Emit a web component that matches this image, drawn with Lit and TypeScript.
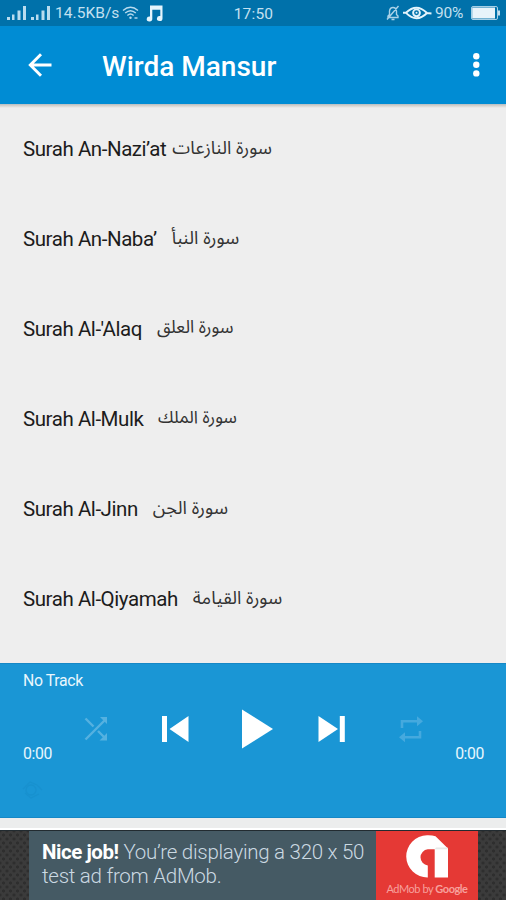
import { LitElement, html, svg, css } from "lit";
import { customElement } from "lit/decorators.js";

interface Surah { latin: string; arabic: string; gap: number; size: number }

const SURAHS: Surah[] = [
  { latin: "Surah An-Nazi’at", arabic: "سورة النازعات", gap: 6, size: 18.1 },
  { latin: "Surah An-Naba’", arabic: "سورة النبأ", gap: 15, size: 18.2 },
  { latin: "Surah Al-'Alaq", arabic: "سورة العلق", gap: 15, size: 17.5 },
  { latin: "Surah Al-Mulk", arabic: "سورة الملك", gap: 14.5, size: 17.4 },
  { latin: "Surah Al-Jinn", arabic: "سورة الجن", gap: 15, size: 18.3 },
  { latin: "Surah Al-Qiyamah", arabic: "سورة القيامة", gap: 15, size: 18.2 },
];

@customElement("status-bar")
export class StatusBar extends LitElement {
  static styles = css`
    :host { display: flex; height: 26px; background: #0071aa; color: #c3e0f0; font: 15.5px/27px Roboto, sans-serif; }
    .left, .right { flex: 1; display: flex; align-items: center; }
    .left { padding-left: 7px; }
    .right { justify-content: flex-end; padding-right: 6px; }
    .clock { flex: none; width: 42px; padding-top: 1px; text-align: center; letter-spacing: 0.2px; }
    .speed { margin-left: 4px; width: 65px; padding-top: 1px; letter-spacing: 0.05px; white-space: nowrap; }
    .pct { width: 30px; padding-top: 1px; margin: 0 6px 0 3px; letter-spacing: -0.2px; }
    svg { display: block; flex: none; }
    .sig + .sig { margin-left: 4px; }
    .wifi { margin-left: 2px; }
    .note { margin-left: 7px; }
    .eye { margin-left: 3px; }
  `;
  private signal() {
    return html`<svg class="sig" width="20" height="14" viewBox="0 0 20 14" fill="#b9dcef">
      <path d="M0 11h3v3H0zM5 8.500h2.500v5.500H5zM10.500 4.500h3v9.500h-3zM16 0h3v14h-3z"/></svg>`;
  }
  render() {
    return html`
      <div class="left">
        ${this.signal()}${this.signal()}
        <span class="speed">14.5KB/s</span>
        <svg class="wifi" width="17" height="14" viewBox="0 0 17 14" fill="none" stroke="#b9dcef" stroke-width="1.400">
          <path d="M1 4.500Q8.500-2 16 4.500M3.200 7Q8.500 2.300 13.800 7M5.400 9.400Q8.500 6.600 11.600 9.400"/>
          <circle cx="8.500" cy="11.800" r="1.200" fill="#b9dcef" stroke="none"/><path d="M12.500 12h3"/></svg>
        <svg class="note" width="17" height="17" viewBox="0 0 17 17" fill="#e4f4fc">
          <path d="M4 .5h12.500v13a2.800 2.500 0 1 1-2.200-2.400V4.800H6.300v9.200a2.800 2.500 0 1 1-2.300-2.500z"/></svg>
      </div>
      <span class="clock">17:50</span>
      <div class="right">
        <svg width="14" height="16" viewBox="0 0 14 16" fill="none" stroke="#a9d2e8" stroke-width="1.400">
          <path d="M2 12.500V11l1.500-1.500V6Q4 2.500 7 2.500T10.500 6v3.500L12 11v1.500zM1 14.500L12.500 1M5.500 14.500h3"/></svg>
        <svg class="eye" width="29" height="14" viewBox="0 0 29 14" fill="none" stroke="#e4f4fc" stroke-width="1.900">
          <path d="M0 6.800h3Q13.500-3.500 24 7L28.500 7.500M3 6.800Q13.500 17.500 24 7"/>
          <circle cx="13.500" cy="6.800" r="3.400"/><circle cx="13.500" cy="6.800" r="1" fill="#e4f4fc" stroke="none"/></svg>
        <span class="pct">90%</span>
        <svg width="29" height="14" viewBox="0 0 29 14"><rect x=".5" y=".5" width="26" height="13" rx="1.500" fill="none" stroke="#a5cfe6"/>
          <rect x="1.200" y="1.500" width="22.800" height="11" fill="#e8f3fa"/><path d="M27 4.500h2v5h-2z" fill="#c3e0f0"/></svg>
      </div>`;
  }
}

@customElement("player-bar")
export class PlayerBar extends LitElement {
  static styles = css`
    :host { display: flex; flex-direction: column; box-sizing: border-box; height: 155px; padding: 8px 22px 0 23px;
      background: #1a96d5; color: #e9f6fd; font: 15.8px/18px Roboto, sans-serif; border-top: 1px solid #1688c6; border-bottom: 1px solid #1688c6; }
    .track { letter-spacing: -0.35px; }
    .controls { display: grid; grid-template-columns: repeat(5, 78.7px); justify-items: center; align-items: center;
      height: 44px; margin: 17px 0 0 34px; }
    svg { display: block; }
    .times { display: flex; justify-content: space-between; margin-top: -6px; letter-spacing: -0.4px; }
    .ghost { margin: 18px 0 0 -2px; }
  `;
  render() {
    return html`
      <div class="track">No Track</div>
      <div class="controls">
        <svg width="28" height="28" viewBox="0 0 28 28" fill="none" stroke="#55b1e0" stroke-width="2.400">
          <path d="M3.500 3.500L11.500 11.500M3.500 24.500L23 5M16 16L23.500 23.500"/><path d="M18 2h7v7zM25 18v7.500h-7.500z" fill="#55b1e0" stroke="none"/></svg>
        <svg width="30" height="28" viewBox="0 0 30 28" fill="#fff"><path d="M2 1h5v26H2zM28.500 1v26L9.500 14z"/></svg>
        <svg width="38" height="40" viewBox="0 0 38 40" fill="#fff"><path d="M7 0.500L38 20L7 39.500z"/></svg>
        <svg width="30" height="28" viewBox="0 0 30 28" fill="#fff"><path d="M1.500 1v26L21 14zM22.800 1h5v26h-5z"/></svg>
        <svg width="28" height="28" viewBox="0 0 28 28" fill="none" stroke="#45a9de" stroke-width="2.600">
          <path d="M5 13V6.200h16M23 16v6.300H8"/><path d="M20 1.200l6 5-6 5zM8 17.300l-6 5 6 5z" fill="#45a9de" stroke="none"/></svg>
      </div>
      <div class="times"><span>0:00</span><span>0:00</span></div>
      <svg class="ghost" width="24" height="18" viewBox="0 0 24 18" fill="none" stroke="#1891cf" stroke-width="1.300">
        <circle cx="10" cy="9" r="5"/><path d="M2 8l7-7 7 3 5 5M4 12l6 5 8-4"/></svg>`;
  }
}

@customElement("ad-banner")
export class AdBanner extends LitElement {
  static styles = css`
    :host { display: flex; box-sizing: border-box; height: 70px; padding-left: 29px; border-top: 1px solid #222b30;
      background: radial-gradient(circle, #2e2e2e 1.300px, transparent 1.900px) 0 0 / 7px 8px,
        radial-gradient(circle, #2e2e2e 1.300px, transparent 1.900px) 3.500px 4px / 7px 8px, #3b3b3b; }
    .copy { box-sizing: border-box; width: 347px; padding: 10px 0 0 13px; background: #455a64; color: #cbd9e2;
      font: 300 20.5px/23.500px Roboto, sans-serif; letter-spacing: -0.27px; white-space: nowrap; }
    .copy b { font-weight: 700; color: #fff; letter-spacing: -0.45px; }
    .brand { width: 102px; background: #e53935; display: flex; flex-direction: column; align-items: center; color: #f7a09c;
      font: 11px/13px Lato, sans-serif; letter-spacing: -0.45px; white-space: nowrap; }
    .brand svg { display: block; margin-top: 4px; }
    .brand span { margin-top: 4px; }
    .brand b { font-weight: 700; }
  `;
  render() {
    return html`
      <div class="copy">
        <div><b>Nice job!</b> You’re displaying a 320 x 50</div>
        <div>test ad from AdMob.</div>
      </div>
      <div class="brand">
        <svg width="42" height="43" viewBox="0 0 42 43" fill="#fff">
          <path d="M21.800 42.500V30.500A8.200 8.200 0 0 1 21.800 14.200H28.700V42.500H42V13.500L29.500 1.300Q26 0 21 .2A21 21 0 0 0 21.800 42.500z"/>
          <path d="M28.700 14.200H42L41.500 12.500H30z" fill="#e8e8e8"/></svg>
        <span>AdMob by <b>Google</b></span>
      </div>`;
  }
}

@customElement("app-root")
export class AppRoot extends LitElement {
  static styles = css`
    :host { display: flex; flex-direction: column; width: 506px; height: 900px; overflow: hidden; background: #eee; font-family: Roboto, sans-serif; }
    .bar { display: flex; align-items: center; height: 78px; box-sizing: border-box; padding: 0 26px 0 28px; background: #008cd4; color: #fff; }
    .title { flex: 1; margin-left: 50px; font: 500 28px/36px Roboto, sans-serif; padding-top: 4px; }
    svg { display: block; }
    .shade { height: 4px; background: linear-gradient(#b5bdc2, #d6d3cf 45%, #eee); }
    .list { flex: 1; display: flex; flex-direction: column; overflow: hidden; color: #1c1c1c; }
    .row { flex: none; display: flex; align-items: center; box-sizing: border-box; height: 90px; padding: 0 0 9px 23px; font-size: 20.5px; line-height: 26px; white-space: nowrap; }
    .latin { letter-spacing: -0.44px; }
    .arabic { font-family: "Noto Sans Arabic", "DejaVu Sans", sans-serif; color: #333; padding-bottom: 2px; }
    .gap { height: 12px; box-sizing: border-box; background: #eceded; border-bottom: 2px solid #fff; }
  `;
  render() {
    return html`
      <status-bar></status-bar>
      <header class="bar">
        <svg width="24" height="24" viewBox="0 0 24 24" fill="none" stroke="#fff" stroke-width="2.900"><path d="M23.500 12H3M13 1.300L2.300 12L13 22.700"/></svg>
        <div class="title">Wirda Mansur</div>
        <svg width="7" height="24" viewBox="0 0 7 24" fill="#fff">${[3.2, 11.8, 20.4].map((y) => svg`<circle cx="3.300" cy=${y} r="3.200"/>`)}</svg>
      </header>
      <div class="shade"></div>
      <main class="list">
        ${SURAHS.map((s) => html`<div class="row">
          <span class="latin">${s.latin}</span>
          <span class="arabic" dir="rtl" lang="ar" style="margin-left:${s.gap}px;font-size:${s.size}px">${s.arabic}</span>
        </div>`)}
      </main>
      <player-bar></player-bar>
      <div class="gap"></div>
      <ad-banner></ad-banner>`;
  }
}
